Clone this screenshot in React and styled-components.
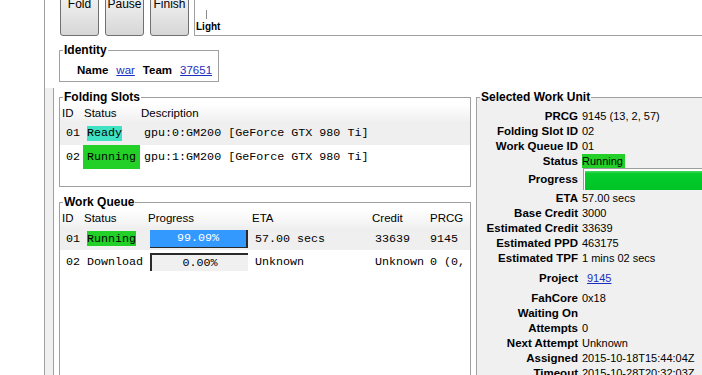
import React from 'react';
import styled, { createGlobalStyle } from 'styled-components';

const GlobalStyle = createGlobalStyle`
  html, body {
    margin: 0;
    padding: 0;
    background: #fff;
  }
  body {
    font-family: "Liberation Sans", Arial, sans-serif;
    font-size: 11.5px;
    color: #000;
  }
`;

const colors = {
  line: '#a0a0a0',
  panel: '#f0f0f0',
  shade: '#efefef',
  link: '#1a2fc0',
  ready: '#3fe2c2',
  running: '#22d028',
  blue: '#3399ff',
};

const Window = styled.div`
  display: flex;
  width: 702px;
  height: 375px;
  overflow: hidden;
`;

const LeftPane = styled.div`
  flex: none;
  width: 44px;
  border-right: 1px solid ${colors.line};
`;

const Main = styled.div`
  flex: 1;
  min-width: 0;
  display: flex;
  flex-direction: column;
`;

const Toolbar = styled.div`
  flex: none;
  display: flex;
  align-items: flex-end;
  gap: 6px;
  height: 36px;
  padding-left: 15px;
  overflow: hidden;
`;

const ToolButton = styled.div`
  flex: none;
  box-sizing: border-box;
  width: 39px;
  height: 46px;
  padding-top: 6px;
  display: flex;
  justify-content: center;
  font-size: 12px;
  line-height: 14px;
  border: 1px solid #707070;
  border-radius: 3px;
  background: linear-gradient(#f4f4f4, #e8e8e8 45%, #d6d6d6);
`;

const SliderFrame = styled.div`
  flex: 1;
  box-sizing: border-box;
  height: 36px;
  margin-left: -1px;
  padding-top: 10px;
  border-left: 1px solid ${colors.line};
  border-bottom: 1px solid ${colors.line};
  display: flex;
  flex-direction: column;
`;

const Tick = styled.div`
  width: 1px;
  height: 9px;
  margin-left: 11px;
  background: #8a8a8a;
`;

const SliderLabel = styled.div`
  margin-top: 2px;
  padding-left: 1px;
  font-size: 10px;
  line-height: 11px;
  font-weight: bold;
`;

const Group = styled.fieldset`
  box-sizing: border-box;
  margin: ${p => p.$margin || 0};
  padding: 0;
  min-width: 0;
  width: ${p => p.$width};
  height: ${p => p.$height};
  border: 1px solid ${colors.line};
  background: ${p => p.$bg || '#fff'};
  flex: none;
`;

const Legend = styled.legend`
  margin-left: 3px;
  padding: 0 1px;
  font-size: 12px;
  line-height: 13px;
  font-weight: bold;
`;

const IdentityRow = styled.div`
  display: flex;
  align-items: center;
  gap: 8px;
  height: 14px;
  padding: 6px 0 4px 17px;
`;

const Bold = styled.span`
  font-weight: bold;
`;

const Link = styled.a`
  color: ${colors.link};
  text-decoration: underline;
  margin-left: ${p => p.$offset || 0}px;
`;

const Body = styled.div`
  flex: 1;
  min-height: 0;
  display: flex;
  margin-top: 6px;
`;

const Strip = styled.div`
  flex: none;
  width: 8px;
  background: ${colors.panel};
  border-right: 1px solid ${colors.line};
`;

const LeftCol = styled.div`
  flex: none;
  width: 412px;
  margin-left: 5px;
  display: flex;
  flex-direction: column;
`;

const RightCol = styled.div`
  flex: none;
  margin-left: 5px;
`;

const Table = styled.div`
  height: ${p => p.$height}px;
  overflow: hidden;
`;

const Row = styled.div`
  display: grid;
  grid-template-columns: ${p => p.$cols};
  height: ${p => p.$h}px;
  align-items: center;
  background: ${p => (p.$head ? 'linear-gradient(#ffffff, #f1f1f1)' : p.$shade ? colors.shade : 'transparent')};
`;

const Cell = styled.div`
  padding-left: ${p => p.$pad || 0}px;
  height: 100%;
  display: flex;
  align-items: center;
  white-space: nowrap;
  overflow: hidden;
  font-family: ${p => (p.$mono ? '"Liberation Mono", "Courier New", monospace' : 'inherit')};
  font-size: ${p => (p.$mono ? '11.7px' : '11.5px')};
`;

const Badge = styled.span`
  display: inline-flex;
  align-items: center;
  height: ${p => (p.$full ? '100%' : '15px')};
  padding: ${p => (p.$full ? '0 4px' : '0')};
  background: ${p => p.$color};
`;

const Bar = styled.div`
  box-sizing: border-box;
  width: 98px;
  height: 18px;
  display: flex;
  align-items: center;
  justify-content: center;
  color: ${p => (p.$done ? '#fff' : '#000')};
  background: ${p => (p.$done ? colors.blue : colors.panel)};
  border-style: solid;
  border-color: #2a2a2a;
  border-width: ${p => (p.$done ? '0 2px 1px 0' : '2px 0 0 2px')};
`;

const InfoList = styled.div`
  padding-top: 4px;
`;

const InfoRow = styled.div`
  display: grid;
  grid-template-columns: 101px 1fr;
  column-gap: 4px;
  align-items: center;
  height: ${p => p.$h || 15}px;
  font-size: 11px;
  white-space: nowrap;
`;

const Label = styled.div`
  text-align: right;
  font-weight: bold;
  font-size: 11.5px;
`;

const Value = styled.div`
  display: flex;
  align-items: center;
  height: 100%;
`;

const StatusTag = styled.span`
  display: inline-block;
  height: 14px;
  line-height: 14px;
  padding-right: 2px;
  background: ${colors.running};
`;

const WuBar = styled.div`
  box-sizing: border-box;
  width: 200px;
  height: 22px;
  margin-left: 1px;
  border-top: 1px solid #9c9c9c;
  border-left: 1px solid #9c9c9c;
  box-shadow: inset 1px 2px 0 #fff;
  background: linear-gradient(#7de88a, #06cc2c 22%, #00c426);
`;

const slotCols = '23px 58px 1fr';
const queueCols = '23px 64px 103px 120px 58px 1fr';

const slots = [
  { id: '01', status: 'Ready', color: colors.ready, full: false, desc: 'gpu:0:GM200 [GeForce GTX 980 Ti]' },
  { id: '02', status: 'Running', color: colors.running, full: true, desc: 'gpu:1:GM200 [GeForce GTX 980 Ti]' },
];

const queue = [
  { id: '01', status: 'Running', progress: '99.09%', done: true, eta: '57.00 secs', credit: '33639', prcg: '9145' },
  { id: '02', status: 'Download', progress: '0.00%', done: false, eta: 'Unknown', credit: 'Unknown', prcg: '0 (0, 0, 0)' },
];

const info = [
  ['PRCG', '9145 (13, 2, 57)'],
  ['Folding Slot ID', '02'],
  ['Work Queue ID', '01'],
  ['Status', 'status'],
  ['Progress', 'progress', 22],
  ['ETA', '57.00 secs'],
  ['Base Credit', '3000'],
  ['Estimated Credit', '33639'],
  ['Estimated PPD', '463175'],
  ['Estimated TPF', '1 mins 02 secs'],
  ['Project', 'project', 25],
  ['FahCore', '0x18'],
  ['Waiting On', ''],
  ['Attempts', '0'],
  ['Next Attempt', 'Unknown'],
  ['Assigned', '2015-10-18T15:44:04Z'],
  ['Timeout', '2015-10-28T20:32:03Z'],
];

function renderValue(v) {
  if (v === 'status') return <StatusTag>Running</StatusTag>;
  if (v === 'progress') return <WuBar />;
  if (v === 'project') return <Link $offset={5}>9145</Link>;
  return v;
}

export default function App() {
  return (
    <>
      <GlobalStyle />
      <Window>
        <LeftPane />
        <Main>
          <Toolbar>
            <ToolButton>Fold</ToolButton>
            <ToolButton>Pause</ToolButton>
            <ToolButton>Finish</ToolButton>
            <SliderFrame>
              <Tick />
              <SliderLabel>Light</SliderLabel>
            </SliderFrame>
          </Toolbar>

          <Group $margin="8px 0 0 14px" $width="160px">
            <Legend>Identity</Legend>
            <IdentityRow>
              <Bold>Name</Bold>
              <Link>war</Link>
              <Bold>Team</Bold>
              <Link>37651</Link>
            </IdentityRow>
          </Group>

          <Body>
            <Strip />
            <LeftCol>
              <Group $margin="3px 0 0 0">
                <Legend>Folding Slots</Legend>
                <Table $height={82}>
                  <Row $cols={slotCols} $h={17} $head>
                    <Cell $pad={2}>ID</Cell>
                    <Cell $pad={1}>Status</Cell>
                    <Cell>Description</Cell>
                  </Row>
                  {slots.map((s, i) => (
                    <Row key={s.id} $cols={slotCols} $h={24} $shade={i === 0}>
                      <Cell $mono $pad={6}>{s.id}</Cell>
                      <Cell $mono $pad={s.full ? 0 : 4}>
                        <Badge $color={s.color} $full={s.full}>{s.status}</Badge>
                      </Cell>
                      <Cell $mono $pad={3}>{s.desc}</Cell>
                    </Row>
                  ))}
                </Table>
              </Group>

              <Group $margin="9px 0 0 0" $height="220px">
                <Legend>Work Queue</Legend>
                <Table $height={200}>
                  <Row $cols={queueCols} $h={18} $head>
                    <Cell $pad={2}>ID</Cell>
                    <Cell $pad={1}>Status</Cell>
                    <Cell $pad={1}>Progress</Cell>
                    <Cell $pad={2}>ETA</Cell>
                    <Cell $pad={2}>Credit</Cell>
                    <Cell $pad={2}>PRCG</Cell>
                  </Row>
                  {queue.map((q, i) => (
                    <Row key={q.id} $cols={queueCols} $h={i === 0 ? 23 : 24} $shade={i === 0}>
                      <Cell $mono $pad={6}>{q.id}</Cell>
                      <Cell $mono $pad={4}>
                        {q.done ? <Badge $color={colors.running}>{q.status}</Badge> : q.status}
                      </Cell>
                      <Cell $mono $pad={3}>
                        <Bar $done={q.done}>{q.progress}</Bar>
                      </Cell>
                      <Cell $mono $pad={5}>{q.eta}</Cell>
                      <Cell $mono $pad={5}>{q.credit}</Cell>
                      <Cell $mono $pad={2}>{q.prcg}</Cell>
                    </Row>
                  ))}
                </Table>
              </Group>
            </LeftCol>

            <RightCol>
              <Group $margin="3px 0 0 0" $width="260px" $height="320px" $bg={colors.panel}>
                <Legend>Selected Work Unit</Legend>
                <InfoList>
                  {info.map(([label, value, h]) => (
                    <InfoRow key={label} $h={h}>
                      <Label>{label}</Label>
                      <Value>{renderValue(value)}</Value>
                    </InfoRow>
                  ))}
                </InfoList>
              </Group>
            </RightCol>
          </Body>
        </Main>
      </Window>
    </>
  );
}
